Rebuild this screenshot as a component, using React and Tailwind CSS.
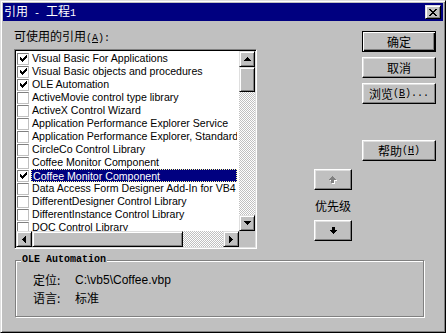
import React from 'react';

const raised =
  'border border-t-white border-l-white border-r-black border-b-black shadow-[inset_-1px_-1px_0_#808080,inset_1px_1px_0_#dfdfdf]';
const scrollBtn =
  'border border-t-[#dfdfdf] border-l-[#dfdfdf] border-r-black border-b-black shadow-[inset_1px_1px_0_#fff,inset_-1px_-1px_0_#808080] bg-[#c0c0c0]';
const dither = 'bg-[image:repeating-conic-gradient(#c0c0c0_0_25%,#ffffff_0_50%)] bg-[length:2px_2px]';
const cjk = "font-['Noto_Sans_CJK_SC',sans-serif]";
const mono = "font-['Liberation_Mono',monospace] text-[10px]";

const refs = [
  { name: 'Visual Basic For Applications', on: true },
  { name: 'Visual Basic objects and procedures', on: true },
  { name: 'OLE Automation', on: true },
  { name: 'ActiveMovie control type library' },
  { name: 'ActiveX Control Wizard' },
  { name: 'Application Performance Explorer Service' },
  { name: 'Application Performance Explorer, Standard' },
  { name: 'CircleCo Control Library' },
  { name: 'Coffee Monitor Component' },
  { name: 'Coffee Monitor Component', on: true, selected: true },
  { name: 'Data Access Form Designer Add-In for VB4' },
  { name: 'DifferentDesigner Control Library' },
  { name: 'DifferentInstance Control Library' },
  { name: 'DOC Control Library' },
];

function Px({ d, w, h, color = '#000', className = '' }) {
  return (
    <svg width={w} height={h} viewBox={`0 0 ${w} ${h}`} shapeRendering="crispEdges" className={className}>
      <path d={d} fill={color} />
    </svg>
  );
}

const arrows = {
  up: 'M3 0h1v1h1v1h1v1h1v1H0V3h1V2h1V1h1z',
  down: 'M0 0h7v1H6v1H5v1H4v1H3V3H2V2H1V1H0z',
  left: 'M3 0h1v7H3V6H2V5H1V4H0V3h1V2h1V1h1z',
  right: 'M0 0h1v1h1v1h1v1h1v1H3v1H2v1H1v1H0z',
};

function Check() {
  // classic 7x7 tick
  const cols = [2, 3, 4, 3, 2, 1, 0];
  return (
    <svg width="7" height="7" viewBox="0 0 7 7" shapeRendering="crispEdges">
      {cols.map((y, x) => (
        <rect key={x} x={x} y={y} width="1" height="3" fill="#000" />
      ))}
    </svg>
  );
}

function CloseX() {
  const rows = ['11....11', '.11..11.', '..1111..', '...11...', '..1111..', '.11..11.', '11....11'];
  return (
    <svg width="8" height="7" viewBox="0 0 8 7" shapeRendering="crispEdges">
      {rows.flatMap((r, y) =>
        r.split('').map((c, x) => (c === '1' ? <rect key={`${x}-${y}`} x={x} y={y} width="1" height="1" fill="#000" /> : null))
      )}
    </svg>
  );
}

function Btn({ children, def, className = '' }) {
  const frame = def
    ? 'border border-black shadow-[inset_1px_1px_0_#fff,inset_-1px_-1px_0_#000,inset_-2px_-2px_0_#808080]'
    : raised;
  return (
    <div className={`${frame} h-[21px] w-[74px] flex items-center justify-center text-[12px] leading-[14px] text-black ${className}`}>
      {children}
    </div>
  );
}

function Row({ item }) {
  return (
    <div className="h-[13px] flex items-center shrink-0">
      <div className="ml-px w-[12px] h-[12px] shrink-0 bg-white border border-t-[#808080] border-l-[#808080] border-r-[#c0c0c0] border-b-[#c0c0c0] flex items-center justify-center">
        {item.on && <Check />}
      </div>
      <div
        className={`ml-[2px] mr-[2px] h-[13px] flex-1 pl-px leading-[12px] whitespace-nowrap overflow-hidden ${
          item.selected ? 'bg-[#000080] text-white border border-dotted border-[#ffff9c] pl-0' : 'text-black'
        }`}
      >
        {item.name}
      </div>
    </div>
  );
}

export default function App() {
  return (
    <div className="w-[446px] h-[333px] bg-[#c0c0c0] border border-t-[#dfdfdf] border-l-[#dfdfdf] border-r-black border-b-black shadow-[inset_1px_1px_0_#fff,inset_-1px_-1px_0_#808080] p-[2px] flex flex-col">
      {/* title bar */}
      <div className="h-[18px] bg-[#000080] flex items-center justify-between pl-px pr-[2px] shrink-0">
        <div className={`${cjk} text-[12px] leading-[18px] text-white whitespace-pre`}>
          引用<span className={mono}> - </span>工程<span className={mono}>1</span>
        </div>
        <div className={`${scrollBtn} w-[16px] h-[14px] flex items-center justify-center`}>
          <CloseX />
        </div>
      </div>

      <div className={`${cjk} flex-1 flex flex-col`}>
        <div className="flex items-start pt-[8px]">
          {/* references list */}
          <div className="ml-[11px] w-[243px] flex flex-col">
            <div className="h-[14px] text-[12px] leading-[14px] mb-[6px] whitespace-pre">
              可使用的引用
              <span className={mono}>
                (<span className="underline">A</span>):
              </span>
            </div>
            <div className="h-[200px] w-[243px] bg-white border border-t-[#808080] border-l-[#808080] border-r-white border-b-white shadow-[inset_1px_1px_0_#000,inset_-1px_-1px_0_#dfdfdf] p-px flex flex-col">
              <div className="h-[180px] flex">
                <div className="flex-1 overflow-hidden pt-px flex flex-col font-['Liberation_Sans',sans-serif] text-[10.6px]">
                  {refs.map((r, i) => (
                    <Row key={i} item={r} />
                  ))}
                </div>
                <div className="w-[16px] flex flex-col">
                  <div className={`${scrollBtn} h-[16px] flex items-center justify-center`}>
                    <Px d={arrows.up} w={7} h={4} />
                  </div>
                  <div className={`${scrollBtn} h-[25px]`} />
                  <div className={`flex-1 ${dither}`} />
                  <div className={`${scrollBtn} h-[16px] flex items-center justify-center`}>
                    <Px d={arrows.down} w={7} h={4} />
                  </div>
                </div>
              </div>
              <div className="h-[16px] flex">
                <div className={`${scrollBtn} w-[16px] flex items-center justify-center`}>
                  <Px d={arrows.left} w={4} h={7} />
                </div>
                <div className={`${scrollBtn} w-[151px]`} />
                <div className={`flex-1 ${dither}`} />
                <div className={`${scrollBtn} w-[16px] flex items-center justify-center`}>
                  <Px d={arrows.right} w={4} h={7} />
                </div>
                <div className="w-[16px] bg-[#c0c0c0]" />
              </div>
            </div>
          </div>

          {/* priority */}
          <div className="ml-[57px] mt-[140px] w-[38px] flex flex-col items-center">
            <div className={`${raised} w-[38px] h-[21px] flex items-center justify-center`}>
              <div className="relative w-[8px] h-[8px]">
                <Px d="M3 0h1v1h1v1h1v1h1v1H5v3H2V4H0V3h1V2h1V1h1z" w={7} h={7} color="#fff" className="absolute left-px top-px" />
                <Px d="M3 0h1v1h1v1h1v1h1v1H5v3H2V4H0V3h1V2h1V1h1z" w={7} h={7} color="#808080" className="absolute left-0 top-0" />
              </div>
            </div>
            <div className="mt-[9px] text-[12px] leading-[14px]">优先级</div>
            <div className={`${raised} mt-[7px] w-[38px] h-[21px] flex items-center justify-center`}>
              <Px d="M2 0h3v3h2v1H6v1H5v1H4v1H3V6H2V5H1V4H0V3h2z" w={7} h={7} />
            </div>
          </div>

          {/* buttons */}
          <div className="ml-[10px] mt-[2px] w-[74px] flex flex-col">
            <Btn def>确定</Btn>
            <Btn className="mt-[5px]">取消</Btn>
            <Btn className="mt-[5px] whitespace-pre">
              浏览
              <span className={mono}>
                (<span className="underline">B</span>)...
              </span>
            </Btn>
            <Btn className="mt-[36px] whitespace-pre">
              帮助
              <span className={mono}>
                (<span className="underline">H</span>)
              </span>
            </Btn>
          </div>
        </div>

        {/* details group */}
        <div className="relative ml-[12px] mt-[11px] w-[409px] h-[57px] border border-[#808080] shadow-[1px_1px_0_#fff,inset_1px_1px_0_#fff] pt-[12px] pl-[17px] text-[12px]">
          <div className="absolute -top-[8px] left-[5px] px-px bg-[#c0c0c0] font-['Liberation_Mono',monospace] font-bold text-[10px] leading-[14px] text-black">
            OLE Automation
          </div>
          <div className="h-[18px] flex leading-[14px]">
            <div className="w-[42px]">定位:</div>
            <div className="font-['Liberation_Sans',sans-serif] text-[12px]">C:\vb5\Coffee.vbp</div>
          </div>
          <div className="h-[18px] flex leading-[14px]">
            <div className="w-[42px]">语言:</div>
            <div>标准</div>
          </div>
        </div>
      </div>
    </div>
  );
}
